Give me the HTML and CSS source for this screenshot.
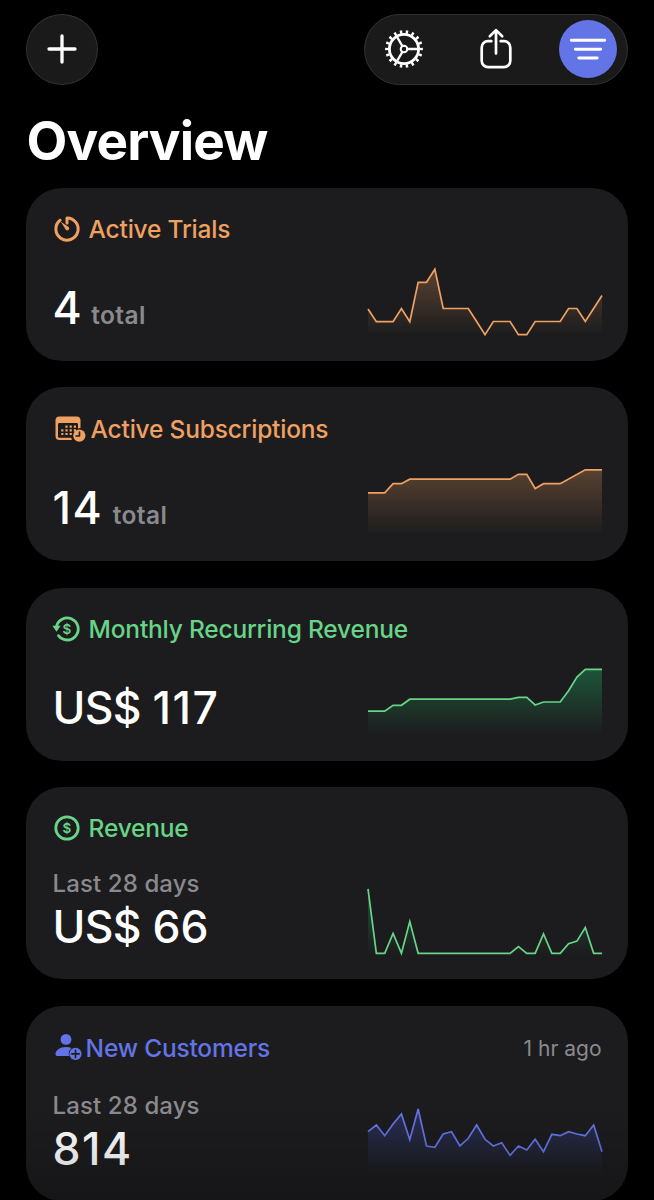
FILE: index.html
```html
<!DOCTYPE html>
<html lang="en">
<head>
  <meta charset="UTF-8" />
  <meta name="viewport" content="width=device-width, initial-scale=1.0"/>
  <title>Overview</title>
  <link rel="stylesheet" href="styles.css">
</head>
<body>
  <!-- shared chart gradients -->
  <svg class="defs" width="0" height="0">
    <defs>
      <linearGradient id="fade-orange" gradientUnits="userSpaceOnUse" x1="0" y1="0" x2="0" y2="66">
        <stop offset="0" stop-color="#f0a061" stop-opacity="0.29"/>
        <stop offset="1" stop-color="#f0a061" stop-opacity="0"/>
      </linearGradient>
      <linearGradient id="fade-green" gradientUnits="userSpaceOnUse" x1="0" y1="0" x2="0" y2="66">
        <stop offset="0" stop-color="#22b467" stop-opacity="0.38"/>
        <stop offset="1" stop-color="#22b467" stop-opacity="0"/>
      </linearGradient>
      <linearGradient id="fade-blue" gradientUnits="userSpaceOnUse" x1="0" y1="0" x2="0" y2="66">
        <stop offset="0" stop-color="#4a5fe0" stop-opacity="0.3"/>
        <stop offset="1" stop-color="#4a5fe0" stop-opacity="0"/>
      </linearGradient>
    </defs>
  </svg>

  <header class="toolbar">
    <button class="add-btn" aria-label="Add">
      <svg width="30" height="30" viewBox="0 0 30 30"><path d="M15 2v26M2 15h26"/></svg>
    </button>
    <div class="actions">
      <button class="action" aria-label="Settings">
        <svg width="40" height="40" viewBox="0 0 40 40">
          <circle cx="20" cy="20" r="14.6" stroke-width="2.8"/>
          <circle class="teeth" cx="20" cy="20" r="17.2" pathLength="180"/>
          <circle cx="20" cy="20" r="3.3" stroke-width="2"/>
          <path d="M23.5 20H34M18.3 17L13 7.9M18.3 23L13 32.1" stroke-width="2.3"/>
        </svg>
      </button>
      <button class="action share" aria-label="Share">
        <svg width="40" height="42" viewBox="0 0 40 42">
          <path d="M15.3 13.2H12a6.3 6.3 0 0 0-6.3 6.3v13.3A6.3 6.3 0 0 0 12 39.1h16a6.3 6.3 0 0 0 6.3-6.3V19.5a6.3 6.3 0 0 0-6.3-6.3h-3.3" stroke-width="2.7"/>
          <path d="M20 25.5V2.5M13.8 8.3L20 2.1l6.2 6.2" stroke-width="2.7"/>
        </svg>
      </button>
      <button class="action filter" aria-label="Filter">
        <svg width="40" height="24" viewBox="0 0 40 24"><path d="M3.3 3.3h33.4M7.3 12.2h25.4M10.8 21h18.4" stroke-width="2.9"/></svg>
      </button>
    </div>
  </header>

  <h1>Overview</h1>

  <main class="cards">
    <section class="card orange">
      <div class="card-head">
        <svg class="icon" width="28" height="30" viewBox="0 0 28 30">
          <path d="M7.1 6.3A11.1 11.1 0 1 0 14 3.9v5" stroke-width="3"/>
          <path class="solid" d="M7.8 7.8l8.1 5.4a2.1 2.1 0 0 1-2.9 2.9z"/>
        </svg>
        <h2>Active Trials</h2>
      </div>
      <div class="card-body">
        <p class="value">4 <span class="unit">total</span></p>
        <svg class="chart" viewBox="0 0 28 66" preserveAspectRatio="none">
          <path class="area" d="M0 40L1 52.7 3 52.7 4 39.5 5 52.7 6 13.3 7 13.3 8 .3 9 39.5 12 39.5 13 52.5 14 65.7 15 52.5 17 52.5 18 65.7 19 65.7 20 52.5 23 52.5 24 39.5 25 39.5 26 52.5 27 39.5 28 26.5V66H0z"/>
          <polyline points="0,40 1,52.7 3,52.7 4,39.5 5,52.7 6,13.3 7,13.3 8,.3 9,39.5 12,39.5 13,52.5 14,65.7 15,52.5 17,52.5 18,65.7 19,65.7 20,52.5 23,52.5 24,39.5 25,39.5 26,52.5 27,39.5 28,26.5"/>
        </svg>
      </div>
    </section>

    <section class="card orange subs">
      <div class="card-head">
        <svg class="icon" width="33" height="30" viewBox="0 0 33 30">
          <path class="solid" fill-rule="evenodd" d="M6.5 2.5h17a4 4 0 0 1 4 4v7.6a7.4 7.4 0 0 0-2.5.3V10.4a1.4 1.4 0 0 0-1.4-1.4H6.4A1.4 1.4 0 0 0 5 10.4v12A1.4 1.4 0 0 0 6.4 23.8h11.8a7.4 7.4 0 0 0 .8 2.2H6.5a4 4 0 0 1-4-4V6.5a4 4 0 0 1 4-4z"/>
          <path class="dots" d="M12.4 12.6h10.6M8.2 16.3h14.8M8.2 20h10.6"/>
          <circle class="solid" cx="26.3" cy="21.6" r="6.1"/>
          <path class="cut" d="M26.5 18v4h-3.4"/>
        </svg>
        <h2>Active Subscriptions</h2>
      </div>
      <div class="card-body">
        <p class="value"><span class="wide">14</span> <span class="unit">total</span></p>
        <svg class="chart" viewBox="0 0 28 66" preserveAspectRatio="none">
          <path class="area" d="M0 23.8L2 23.8 3 14.7 4 14.7 5 10.2 17 10.2 18 5.3 19 5.3 20 19.5 21 14.7 23 14.7 26 .8 28 .8V66H0z"/>
          <polyline points="0,23.8 2,23.8 3,14.7 4,14.7 5,10.2 17,10.2 18,5.3 19,5.3 20,19.5 21,14.7 23,14.7 26,.8 28,.8"/>
        </svg>
      </div>
    </section>

    <section class="card green mrr">
      <div class="card-head">
        <svg class="icon" width="28" height="30" viewBox="0 0 28 30">
          <path d="M3.4 13A11 11 0 1 1 5.5 21.7" stroke-width="2.8"/>
          <path class="solid" d="M-.6 11.8h8.2l-4.1 5.9z"/>
          <text x="14" y="19.7">$</text>
        </svg>
        <h2>Monthly Recurring Revenue</h2>
      </div>
      <div class="card-body">
        <p class="value"><span class="currency">US$</span> <span class="wide">117</span></p>
        <svg class="chart" viewBox="0 0 28 66" preserveAspectRatio="none">
          <path class="area" d="M0 42.2L2 42.2 3 36.3 4 36.3 5 30.2 17 30.2 18 28.3 19 28.3 20 36 21 33 23 33 24 21.7 25 8 26 .4 28 .4V66H0z"/>
          <polyline points="0,42.2 2,42.2 3,36.3 4,36.3 5,30.2 17,30.2 18,28.3 19,28.3 20,36 21,33 23,33 24,21.7 25,8 26,.4 28,.4"/>
        </svg>
      </div>
    </section>

    <section class="card green tall">
      <div class="card-head">
        <svg class="icon" width="28" height="30" viewBox="0 0 28 30">
          <circle cx="14" cy="15" r="11.2" stroke-width="2.8"/>
          <text x="14" y="19.7">$</text>
        </svg>
        <h2>Revenue</h2>
      </div>
      <div class="card-body">
        <div>
          <p class="period">Last 28 days</p>
          <p class="value"><span class="currency">US$</span> 66</p>
        </div>
        <svg class="chart" viewBox="0 0 28 66" preserveAspectRatio="none">
          <path class="area" d="M0 .8L1 65.3 2 65.3 3 45.5 4 65.3 5 33.5 6 65.3 17 65.3 18 58.5 19 65.3 20 65.3 21 45.8 22 65.3 23 65.3 24 55.8 25 53.1 26 39.5 27 65.3 28 65.3V66H0z"/>
          <polyline points="0,.8 1,65.3 2,65.3 3,45.5 4,65.3 5,33.5 6,65.3 17,65.3 18,58.5 19,65.3 20,65.3 21,45.8 22,65.3 23,65.3 24,55.8 25,53.1 26,39.5 27,65.3 28,65.3"/>
        </svg>
      </div>
    </section>

    <section class="card blue last">
      <div class="card-head">
        <svg class="icon" width="31" height="30" viewBox="0 0 31 30">
          <circle class="solid" cx="13" cy="6.4" r="5.4"/>
          <path class="solid" d="M4.7 23c-1.2 0-2.2-.6-2.2-2 0-3.5 4.2-7.1 10.5-7.1 2.1 0 3.9.4 5.5 1.1a7.4 7.4 0 0 0-2.3 8z"/>
          <circle class="solid" cx="22.5" cy="20.9" r="6.1"/>
          <path class="cut" d="M22.5 17.2v7.4M18.8 20.9h7.4"/>
        </svg>
        <h2>New Customers</h2>
        <span class="updated">1 hr ago</span>
      </div>
      <div class="card-body">
        <div>
          <p class="period">Last 28 days</p>
          <p class="value"><span class="wide">814</span></p>
        </div>
        <svg class="chart" viewBox="0 0 28 66" preserveAspectRatio="none">
          <path class="area" d="M0 22.7L1 16 2 26.7 3 15 4 5 5 30.7 6 0 7 37 8 38.3 9 25 10 22.7 11 37 12 29.3 13 16 14 30.3 15 37 16 33.7 17 46.3 18 37 19 41 20 30.3 21 42.7 22 25.3 23 26.7 24 22.7 25 25 26 26.7 27 16 28 42.7V66H0z"/>
          <polyline points="0,22.7 1,16 2,26.7 3,15 4,5 5,30.7 6,0 7,37 8,38.3 9,25 10,22.7 11,37 12,29.3 13,16 14,30.3 15,37 16,33.7 17,46.3 18,37 19,41 20,30.3 21,42.7 22,25.3 23,26.7 24,22.7 25,25 26,26.7 27,16 28,42.7"/>
        </svg>
      </div>
    </section>
  </main>

  <div class="bottom-fade"></div>
</body>
</html>
```

FILE: styles.css
```css
:root {
  --bg: #000000;
  --card: #1c1c1e;
  --control: #1a1a1a;
  --muted: #8a8a8e;
  --orange: #f0a061;
  --green: #67d488;
  --blue: #6374e6;
}

* {
  box-sizing: border-box;
  margin: 0;
  padding: 0;
}

body {
  height: 1200px;
  overflow: hidden;
  background: var(--bg);
  color: #fff;
  font-family: Inter, "Liberation Sans", sans-serif;
  padding: 13.5px 26.5px 0 26px;
}

.defs {
  display: block;
}

svg {
  fill: none;
  stroke: currentColor;
  stroke-linecap: round;
  stroke-linejoin: round;
  overflow: visible;
}

button {
  border: none;
  background: none;
  color: #fff;
  display: flex;
  align-items: center;
  justify-content: center;
}

/* toolbar */
.toolbar {
  display: flex;
  justify-content: space-between;
}

.add-btn {
  width: 72px;
  height: 71px;
  border: 1.5px solid #333;
  border-radius: 50%;
  background: var(--control);
}

.add-btn svg {
  stroke-width: 3.3;
}

.actions {
  width: 264px;
  height: 71px;
  border: 1.5px solid #333;
  border-radius: 36px;
  background: var(--control);
  display: flex;
  align-items: center;
  padding: 0 10px 0 19px;
}

.share {
  margin-left: 52px;
}

.teeth {
  stroke-width: 3.4;
  stroke-linecap: butt;
  stroke-dasharray: 4 6;
  stroke-dashoffset: 2;
}

.filter {
  width: 58px;
  height: 58px;
  border-radius: 50%;
  background: var(--blue);
  margin-left: auto;
}

h1 {
  font-size: 53px;
  line-height: 64px;
  font-weight: 700;
  letter-spacing: -0.85px;
  margin: 24px 0 15px 0.6px;
}

/* cards */
.card {
  height: 173px;
  background: var(--card);
  border-radius: 36px;
  padding: 26px 26px 25.5px 26.6px;
  margin-bottom: 26.5px;
  display: flex;
  flex-direction: column;
  justify-content: space-between;
}

.subs {
  height: 174px;
  padding-top: 26.6px;
}

.mrr {
  margin-bottom: 26px;
}

.tall {
  height: 192.5px;
  padding-bottom: 25px;
  margin-bottom: 27px;
}

.last {
  height: 195px;
  padding-top: 27px;
  padding-bottom: 25px;
  margin-bottom: 0;
}

.card-head {
  display: flex;
  align-items: center;
  height: 30px;
}

.icon {
  flex: none;
  margin-right: 8px;
}

.subs .icon {
  margin-right: 5px;
}

.last .icon {
  margin-right: 2px;
}

.icon .solid {
  fill: currentColor;
  stroke: none;
}

.icon .dots {
  stroke-width: 2.2;
  stroke-linecap: butt;
  stroke-dasharray: 2.2 2;
}

.icon .cut {
  stroke: var(--card);
  stroke-width: 1.6;
}

.icon text {
  fill: currentColor;
  stroke: none;
  font-size: 13.5px;
  font-weight: 600;
  text-anchor: middle;
}

h2 {
  font-size: 24.5px;
  line-height: 30px;
  font-weight: 500;
  letter-spacing: -0.2px;
  white-space: nowrap;
}

.updated {
  margin-left: auto;
  color: var(--muted);
  font-size: 21px;
  white-space: nowrap;
}

.card-body {
  display: flex;
  justify-content: space-between;
  align-items: flex-end;
}

.value {
  font-size: 44.5px;
  line-height: 44px;
  font-weight: 450;
  color: #fff;
  margin-bottom: 5.5px;
  white-space: nowrap;
}

.currency {
  letter-spacing: -0.8px;
}

.wide {
  letter-spacing: 1.5px;
}

.unit {
  color: var(--muted);
  font-size: 24.5px;
  line-height: 1;
  font-weight: 600;
  letter-spacing: 0.4px;
  margin-left: -2.5px;
}

.period {
  color: var(--muted);
  font-size: 24px;
  line-height: 30px;
  font-weight: 500;
  letter-spacing: 0.1px;
  margin-bottom: 6px;
}

.chart {
  flex: none;
  width: 234px;
  height: 66px;
  margin-bottom: 0.5px;
}

.last .chart {
  margin-bottom: 1px;
}

.chart polyline {
  stroke-width: 1.7;
  stroke-linejoin: miter;
  stroke-linecap: butt;
  vector-effect: non-scaling-stroke;
}

.chart .area {
  stroke: none;
}

.orange {
  color: var(--orange);
}

.orange .area {
  fill: url(#fade-orange);
}

.green {
  color: var(--green);
}

.green .area {
  fill: url(#fade-green);
}

.blue {
  color: var(--blue);
}

.blue .area {
  fill: url(#fade-blue);
}

/* content dims towards the bottom of the screen */
.bottom-fade {
  position: absolute;
  left: 0;
  right: 0;
  top: 1110px;
  height: 90px;
  background: linear-gradient(rgba(0, 0, 0, 0), rgba(0, 0, 0, 0.22));
}
```
